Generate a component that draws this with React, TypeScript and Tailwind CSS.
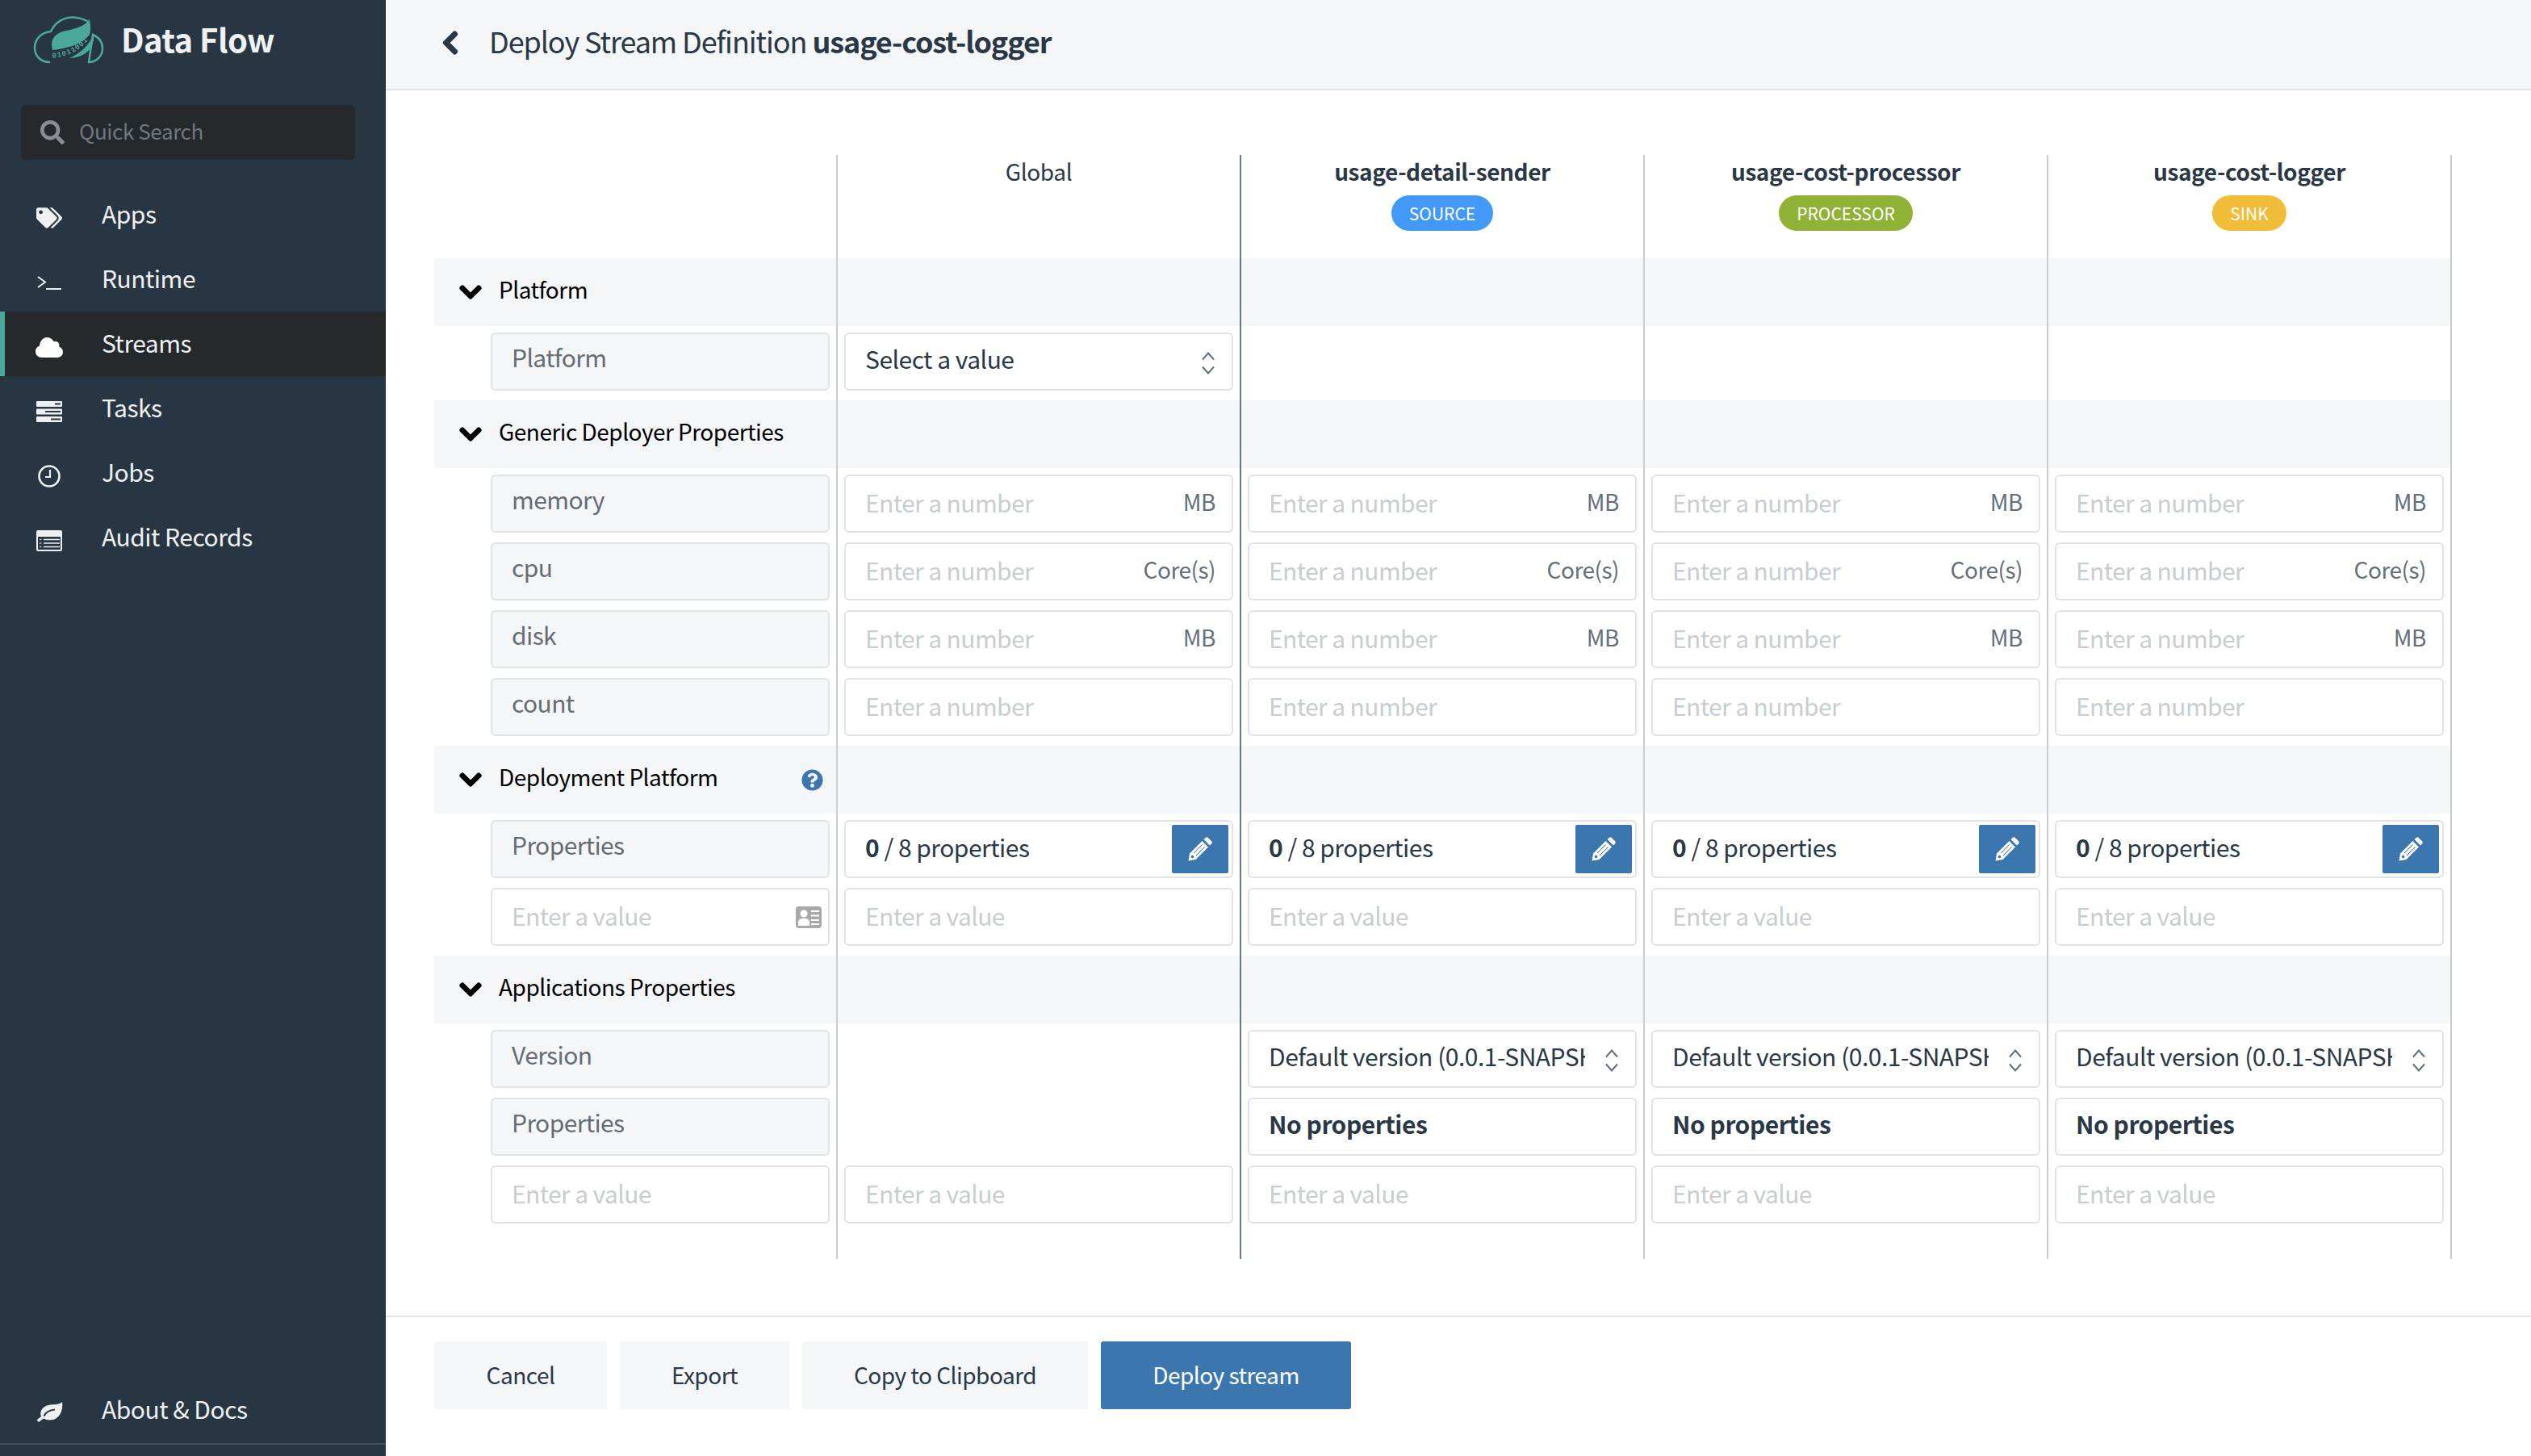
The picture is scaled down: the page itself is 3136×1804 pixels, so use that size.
import React from "react";
import { FaTags, FaSearch, FaChevronDown, FaChevronLeft, FaQuestionCircle } from "react-icons/fa";

function Logo() {
  return (
    <svg width="90" height="62" viewBox="0 0 90 62" className="shrink-0">
      <path d="M22 59 C10 59 3 51 3 41 C3 30 12 22 23 21 C28 10 38 3.5 50 3.5 C58 3.5 65 6 71 10 M75 25 C82 28 87 34 87 42 C87 52 79 59 70 59 Z" fill="none" stroke="#4ba89c" strokeWidth="2.5" />
      <path d="M70.7 6 C66 14 53 18 42 20 C30 22 24 29 24 37 L25 44 C42 42 60 38 71 25 C73 18 72 11 70.7 6 Z" fill="#4ba89c" />
      <path d="M76 25 C78 40 66 54 46 54 C60 48 70 38 76 25 Z" fill="#4ba89c" />
      <defs>
        <path id="logo-band" d="M25 54 C42 52 60 46 72 27" />
      </defs>
      <text fontSize="9" fill="#4ba89c" fontFamily="Liberation Mono, monospace" fontWeight="700" letterSpacing="1">
        <textPath href="#logo-band">01011001</textPath>
      </text>
    </svg>
  );
}

function TerminalIcon() {
  return (
    <svg width="32" height="20" viewBox="0 0 32 20">
      <path d="M2 3 L11 9.5 L2 16" fill="none" stroke="#eef0f1" strokeWidth="2" />
      <path d="M12 18 H31" stroke="#eef0f1" strokeWidth="2" />
    </svg>
  );
}

function CloudIcon() {
  return (
    <svg width="34" height="25" viewBox="0 0 34 25">
      <path d="M8 25 C3 25 0 21.5 0 17.5 C0 14 2 11.5 5 10.5 C5.5 4.5 9.5 0 14 0 C18 0 21 2 23 5.5 C25 4.5 28 5 29 8 C29.5 9.5 29.5 10.5 29 11.5 C32 12.5 34 15 34 18.5 C34 22 31 25 27 25 Z" fill="#ffffff" />
    </svg>
  );
}

function LeafIcon() {
  return (
    <svg width="33" height="25" viewBox="0 0 33 25">
      <path d="M32 0 C33 8 31 16 25 20 C20 23.5 13 23 9 20.5 L3 25 L0.5 22.5 L6 18 C3 10 10 4 18 3.5 C24 3 29 3 32 0 Z" fill="#eef0f1" />
      <path d="M9.5 17.5 C12 12 18 10 23 9.5" fill="none" stroke="#283643" strokeWidth="2" />
    </svg>
  );
}

function PencilIcon() {
  return (
    <svg width="30" height="30" viewBox="0 0 30 30">
      <path d="M19.5 3 L22 0.7 a2 2 0 0 1 2.6 0 L29.3 5.4 a2 2 0 0 1 0 2.6 L27 10.5 Z" fill="#ffffff" />
      <path d="M17.5 5 L25 12.5 L9.5 28 L0.5 29.5 L2 20.5 Z" fill="#ffffff" />
      <path d="M17.5 9.5 L7 20 M20.5 12.5 L10 23" stroke="#3b77ae" strokeWidth="1" />
      <circle cx="5.5" cy="24.5" r="1.8" fill="#3b77ae" />
    </svg>
  );
}

function CardIcon() {
  return (
    <svg width="32" height="27" viewBox="0 0 32 27" className="shrink-0">
      <rect width="32" height="27" rx="4" fill="#a9a9a9" />
      <circle cx="10" cy="9" r="4.5" fill="#ffffff" />
      <path d="M3 24 V20 C3 16 6 15 10 15 C14 15 17 16 17 20 V24 Z" fill="#ffffff" />
      <path d="M19 6 H29 M19 11.5 H29 M19 17 H29 M19 22 H29" stroke="#ffffff" strokeWidth="2" />
    </svg>
  );
}

function TasksIcon() {
  return (
    <svg width="32" height="26" viewBox="0 0 32 26">
      <rect x="0" y="0" width="32" height="7" rx="1" fill="#eef0f1" />
      <rect x="0" y="9.5" width="32" height="7" rx="1" fill="#eef0f1" />
      <rect x="0" y="19" width="32" height="7" rx="1" fill="#eef0f1" />
      <rect x="23" y="2.5" width="7" height="2" fill="#283643" />
      <rect x="11" y="12" width="19" height="2" fill="#283643" />
      <rect x="18" y="21.5" width="12" height="2" fill="#283643" />
    </svg>
  );
}

function ClockIcon() {
  return (
    <svg width="30" height="30" viewBox="0 0 30 30">
      <circle cx="15" cy="15" r="12.5" fill="none" stroke="#eef0f1" strokeWidth="2.6" />
      <path d="M16 7 V16 H10" fill="none" stroke="#eef0f1" strokeWidth="2.2" />
    </svg>
  );
}

function AuditIcon() {
  return (
    <svg width="32" height="26" viewBox="0 0 32 26">
      <path d="M2 0 H30 a2 2 0 0 1 2 2 V24 a2 2 0 0 1 -2 2 H2 a2 2 0 0 1 -2 -2 V2 a2 2 0 0 1 2 -2 Z" fill="#eef0f1" />
      <rect x="2" y="8" width="28" height="16" fill="#283643" />
      <path d="M9 11.5 H29 M9 16 H29 M9 20.5 H29" stroke="#eef0f1" strokeWidth="1.6" />
      <path d="M4 11.5 H7 M4 16 H7 M4 20.5 H7" stroke="#eef0f1" strokeWidth="1.6" strokeDasharray="1.6 1" />
    </svg>
  );
}

function NavItem({ icon, label, active }: { icon: React.ReactNode; label: string; active?: boolean }) {
  return (
    <div className={active ? "flex h-[80px] items-center bg-[#25292c] border-l-[6px] border-[#4ba89c] pl-[38px]" : "flex h-[80px] items-center pl-[44px]"}>
      <div className="flex w-[34px] justify-center pt-[8px]">{icon}</div>
      <span className="ml-[48px] pb-[4px] text-[30px] tracking-[-0.5px] text-[#eef0f1]">{label}</span>
    </div>
  );
}

function Sidebar() {
  return (
    <aside className="flex w-[478px] shrink-0 flex-col bg-[#283643]">
      <div className="flex h-[100px] items-center pl-[40px] pb-[2px]">
        <Logo />
        <span className="ml-[20px] pb-[2px] text-[40px] font-semibold tracking-[-0.6px] text-[#eef0f1]">Data Flow</span>
      </div>
      <div className="ml-[26px] mr-[38px] mt-[30px] flex h-[68px] items-center rounded-[6px] bg-[#25292c] pl-[24px]">
        <FaSearch className="text-[30px] text-[#8a8e92]" />
        <span className="ml-[18px] pb-[6px] text-[26px] tracking-[-0.4px] text-[#72777c]">Quick Search</span>
      </div>
      <nav className="mt-[28px] flex flex-col">
        <NavItem icon={<FaTags className="text-[32px] text-[#eef0f1]" />} label="Apps" />
        <NavItem icon={<TerminalIcon />} label="Runtime" />
        <NavItem icon={<CloudIcon />} label="Streams" active />
        <NavItem icon={<TasksIcon />} label="Tasks" />
        <NavItem icon={<ClockIcon />} label="Jobs" />
        <NavItem icon={<AuditIcon />} label="Audit Records" />
      </nav>
      <div className="mt-auto">
        <div className="flex h-[84px] items-center pl-[44px] pt-[2px]">
          <div className="flex w-[34px] justify-center pt-[4px]">
            <LeafIcon />
          </div>
          <span className="ml-[48px] pb-[4px] text-[30px] tracking-[-0.5px] text-[#eef0f1]">About &amp; Docs</span>
        </div>
        <div className="h-[16px] border-t-2 border-[#40505c]" />
      </div>
    </aside>
  );
}

function Carets() {
  return (
    <svg width="18" height="30" viewBox="0 0 18 30" className="shrink-0">
      <path d="M2 10.5 L9 2.5 L16 10.5" fill="none" stroke="#5f6e7a" strokeWidth="2" />
      <path d="M2 19.5 L9 27.5 L16 19.5" fill="none" stroke="#5f6e7a" strokeWidth="2" />
    </svg>
  );
}

const boxBase = "flex h-[72px] items-center rounded-[6px] border-2 border-[#dfe4e7] bg-white text-[30px] tracking-[-0.5px]";

function LabelBox({ text }: { text: string }) {
  return (
    <div className="flex h-[72px] items-center rounded-[6px] border-2 border-[#dfe4e7] bg-[#f4f6f8] pb-[12px] pl-[24px] text-[30px] tracking-[-0.6px] text-[#666c73]">
      {text}
    </div>
  );
}

function NumberBox({ unit }: { unit?: string }) {
  return (
    <div className={`${boxBase} justify-between pl-[24px] pr-[20px]`}>
      <span className="pb-[4px] tracking-[-0.6px] text-[#c8cdd1]">Enter a number</span>
      {unit && <span className="pb-[6px] text-[28px] text-[#63707c]">{unit}</span>}
    </div>
  );
}

function ValueBox({ card }: { card?: boolean }) {
  return (
    <div className={`${boxBase} justify-between pl-[24px] pr-[8px]`}>
      <span className="pb-[4px] tracking-[-0.6px] text-[#c8cdd1]">Enter a value</span>
      {card && <CardIcon />}
    </div>
  );
}

function SelectBox({ text }: { text: string }) {
  return (
    <div className={`${boxBase} pl-[24px] pr-[20px]`}>
      <span className="w-[392px] overflow-hidden pb-[8px] whitespace-nowrap text-[#2a3845]">{text}</span>
      <span className="ml-auto pt-[4px]">
        <Carets />
      </span>
    </div>
  );
}

function PropertiesBox() {
  return (
    <div className={`${boxBase} justify-between pl-[24px] pr-[4px]`}>
      <span className="pb-[6px] text-[#2a3845]">
        <b className="font-bold">0</b> / 8 properties
      </span>
      <span className="flex h-[60px] w-[70px] items-center justify-center rounded-[2px] bg-[#3b77ae]">
        <PencilIcon />
      </span>
    </div>
  );
}

function StaticBox() {
  return (
    <div className={`${boxBase} pb-[8px] pl-[24px] font-bold text-[#2a3845]`}>No properties</div>
  );
}

type Row = { key: string; cell: (col: number) => React.ReactNode };
type Group = { title: string; help?: boolean; rows: Row[] };

const ver = "Default version (0.0.1-SNAPSHOT)";

const groups: Group[] = [
  {
    title: "Platform",
    rows: [
      { key: "p", cell: (c) => (c === 0 ? <LabelBox text="Platform" /> : c === 1 ? <SelectBox text="Select a value" /> : null) },
    ],
  },
  {
    title: "Generic Deployer Properties",
    rows: [
      { key: "m", cell: (c) => (c === 0 ? <LabelBox text="memory" /> : <NumberBox unit="MB" />) },
      { key: "c", cell: (c) => (c === 0 ? <LabelBox text="cpu" /> : <NumberBox unit="Core(s)" />) },
      { key: "d", cell: (c) => (c === 0 ? <LabelBox text="disk" /> : <NumberBox unit="MB" />) },
      { key: "n", cell: (c) => (c === 0 ? <LabelBox text="count" /> : <NumberBox />) },
    ],
  },
  {
    title: "Deployment Platform",
    help: true,
    rows: [
      { key: "pr", cell: (c) => (c === 0 ? <LabelBox text="Properties" /> : <PropertiesBox />) },
      { key: "v", cell: (c) => (c === 0 ? <ValueBox card /> : <ValueBox />) },
    ],
  },
  {
    title: "Applications Properties",
    rows: [
      { key: "ve", cell: (c) => (c === 0 ? <LabelBox text="Version" /> : c === 1 ? null : <SelectBox text={ver} />) },
      { key: "ap", cell: (c) => (c === 0 ? <LabelBox text="Properties" /> : c === 1 ? null : <StaticBox />) },
      { key: "av", cell: () => <ValueBox /> },
    ],
  },
];

const heads: { name?: string; badge?: string; color?: string; plain?: boolean }[] = [
  {},
  { name: "Global", plain: true },
  { name: "usage-detail-sender", badge: "SOURCE", color: "bg-[#4299f8]" },
  { name: "usage-cost-processor", badge: "PROCESSOR", color: "bg-[#8fb237]" },
  { name: "usage-cost-logger", badge: "SINK", color: "bg-[#f0bd38]" },
];

function Column({ index }: { index: number }) {
  const head = heads[index];
  const isFirst = index === 0;
  return (
    <div className={`w-[500px] border-r-2 pb-[32px] ${index === 1 ? "border-[#63778a]" : "border-[#c9cdd0]"}`}>
      <div className="flex h-[128px] flex-col items-center pt-[2px]">
        {head.name && (
          <span className={`text-[28px] leading-[36px] tracking-[-0.4px] text-[#2a3845] ${head.plain ? "" : "font-semibold"}`}>{head.name}</span>
        )}
        {head.badge && (
          <span className={`mt-[12px] flex h-[44px] items-center rounded-[22px] px-[22px] pt-[2px] text-[21px] text-white ${head.color}`}>
            {head.badge}
          </span>
        )}
      </div>
      {groups.map((g) => (
        <div key={g.title}>
          <div className="flex h-[84px] items-center bg-[#f4f6f8]">
            {isFirst && (
              <>
                <FaChevronDown className="ml-[30px] stroke-[32px] text-[30px] text-black" />
                <span className="ml-[20px] pb-[8px] text-[28px] tracking-[-0.5px] text-black">{g.title}</span>
                {g.help && <FaQuestionCircle className="ml-auto mr-[16px] text-[27px] text-[#3b77ae]" />}
              </>
            )}
          </div>
          <div className="py-[4px]">
            {g.rows.map((r) => (
              <div key={r.key} className={`h-[84px] pt-[4px] pb-[8px] ${isFirst ? "pl-[70px] pr-[8px]" : "pl-[8px] pr-[8px]"}`}>
                {r.cell(index)}
              </div>
            ))}
          </div>
        </div>
      ))}
    </div>
  );
}

function FootButton({ label, w, primary }: { label: string; w: string; primary?: boolean }) {
  return (
    <button className={`flex h-[84px] items-center justify-center rounded-[3px] pb-[2px] text-[28px] tracking-[-0.5px] ${w} ${primary ? "bg-[#3b77ae] text-white" : "bg-[#f4f6f8] text-[#2a3845]"}`}>
      {label}
    </button>
  );
}

export default function App() {
  return (
    <div className="flex h-[1804px] w-[3136px] overflow-hidden bg-white font-['Noto_Sans_CJK_SC','Liberation_Sans',sans-serif]">
      <Sidebar />
      <main className="flex flex-1 flex-col">
        <header className="flex h-[112px] items-center border-b-2 border-[#dfe4e7] bg-[#f4f6f8] pl-[64px] pb-[4px]">
          <FaChevronLeft className="stroke-[32px] text-[32px] text-[#2a3845]" />
          <h1 className="ml-[32px] pb-[6px] text-[36px] font-normal tracking-[-1.1px] text-[#2a3845]">
            Deploy Stream Definition <b className="font-semibold">usage-cost-logger</b>
          </h1>
        </header>
        <section className="ml-[60px] mt-[80px] flex">
          {heads.map((_, i) => (
            <Column key={i} index={i} />
          ))}
        </section>
        <footer className="mt-[70px] flex gap-[16px] border-t-2 border-[#dfe4e7] pl-[60px] pt-[30px]">
          <FootButton label="Cancel" w="w-[214px]" />
          <FootButton label="Export" w="w-[210px]" />
          <FootButton label="Copy to Clipboard" w="w-[354px]" />
          <FootButton label="Deploy stream" w="w-[310px]" primary />
        </footer>
      </main>
    </div>
  );
}
